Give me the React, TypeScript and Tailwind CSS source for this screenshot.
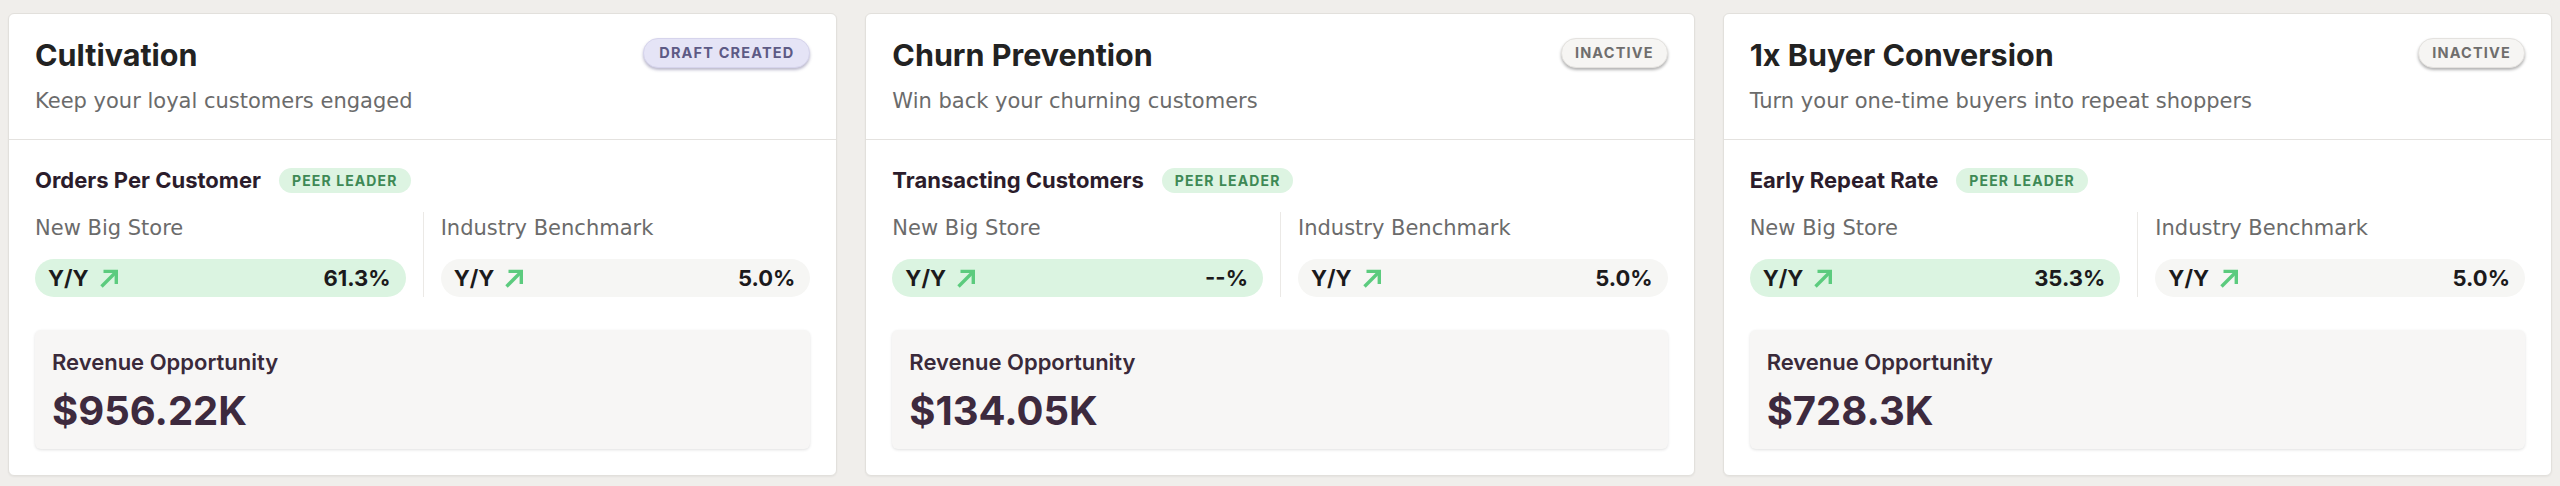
import React from 'react';

type Play = {
  title: string;
  status: 'draft' | 'inactive';
  blurb: string;
  metric: string;
  store: string;
  benchmark: string;
  revenue: string;
};

const PLAYS: Play[] = [
  {
    title: 'Cultivation',
    status: 'draft',
    blurb: 'Keep your loyal customers engaged',
    metric: 'Orders Per Customer',
    store: '61.3%',
    benchmark: '5.0%',
    revenue: '$956.22K',
  },
  {
    title: 'Churn Prevention',
    status: 'inactive',
    blurb: 'Win back your churning customers',
    metric: 'Transacting Customers',
    store: '--%',
    benchmark: '5.0%',
    revenue: '$134.05K',
  },
  {
    title: '1x Buyer Conversion',
    status: 'inactive',
    blurb: 'Turn your one-time buyers into repeat shoppers',
    metric: 'Early Repeat Rate',
    store: '35.3%',
    benchmark: '5.0%',
    revenue: '$728.3K',
  },
];

const heading = "font-['Inter',sans-serif]";
const body = "font-['DejaVu_Sans',sans-serif]";

const UpArrow = () => (
  <svg width="21" height="21" viewBox="0 0 21 21" fill="none" className="shrink-0">
    <path d="M2.5 18.5 L17 4" stroke="#5ccb7e" strokeWidth="3.4" />
    <path d="M4.5 3.4 H17.3 V16" stroke="#5ccb7e" strokeWidth="3.4" />
  </svg>
);

const StatusBadge = ({ status }: { status: Play['status'] }) =>
  status === 'draft' ? (
    <span
      className={`${heading} mt-[1px] inline-flex h-[30px] items-center rounded-full border border-[#d6d4ec] bg-[#e5e4f6] px-[15px] text-[14.5px] font-bold uppercase tracking-[0.08em] text-[#5d5a85] shadow-[0_2px_3px_rgba(60,55,110,0.35)]`}
    >
      Draft Created
    </span>
  ) : (
    <span
      className={`${heading} mt-[1px] inline-flex h-[30px] items-center rounded-full border border-[#e4e2df] bg-[#f6f5f3] px-[13px] text-[14.5px] font-bold uppercase tracking-[0.08em] text-[#6f6e6d] shadow-[0_2px_3px_rgba(0,0,0,0.3)]`}
    >
      Inactive
    </span>
  );

const YoYPill = ({ value, green }: { value: string; green?: boolean }) => (
  <div
    className={`mt-[15px] flex h-[38px] items-center justify-between rounded-full pl-[13px] pr-[15px] ${
      green ? 'bg-[#dbf4e1]' : 'bg-[#f6f6f4]'
    }`}
  >
    <div className="flex items-center gap-[10px]">
      <span className={`${heading} text-[22px] font-bold text-[#1c1a1c]`}>Y/Y</span>
      <UpArrow />
    </div>
    <span className={`${heading} text-[22px] font-bold text-[#1c1a1c]`}>{value}</span>
  </div>
);

const PlayCard = ({ play }: { play: Play }) => (
  <div className="flex flex-col rounded-md border border-[#e2e0dc] bg-white shadow-[0_1px_2px_rgba(0,0,0,0.05)]">
    <div className="border-b border-[#e4e2df] px-[26px] pt-[23px] pb-[24px]">
      <div className="flex items-start justify-between">
        <h2 className={`${heading} text-[30.5px] leading-[36px] font-bold text-[#222222]`}>{play.title}</h2>
        <StatusBadge status={play.status} />
      </div>
      <p className={`${body} mt-[14px] text-[21px] leading-[28px] text-[#6b6b6b]`}>{play.blurb}</p>
    </div>

    <div className="px-[26px] pt-[26px] pb-[26px]">
      <div className="flex items-center gap-[18px]">
        <h3 className={`${heading} text-[22px] leading-[28px] font-bold text-[#2b1c2b]`}>{play.metric}</h3>
        <span
          className={`${heading} inline-flex h-[25px] items-center rounded-full bg-[#ddf4e2] px-[13px] text-[14px] font-bold uppercase tracking-[0.08em] text-[#3e8955]`}
        >
          Peer Leader
        </span>
      </div>

      <div className="mt-[18px] grid grid-cols-2">
        <div className="pr-[17px]">
          <div className={`${body} text-[21px] leading-[32px] text-[#6b6b6b]`}>New Big Store</div>
          <YoYPill value={play.store} green />
        </div>
        <div className="border-l border-[#ebe9e6] pl-[17px]">
          <div className={`${body} text-[21px] leading-[32px] text-[#6b6b6b]`}>Industry Benchmark</div>
          <YoYPill value={play.benchmark} />
        </div>
      </div>

      <div className="mt-[33px] rounded-md bg-[#f7f6f5] px-[17px] pt-[18px] pb-[16px] shadow-[0_1px_3px_rgba(0,0,0,0.12)]">
        <div className={`${heading} text-[22px] leading-[28px] font-semibold text-[#3a2a3a]`}>Revenue Opportunity</div>
        <div className={`${heading} mt-[13px] text-[40px] leading-[44px] font-bold text-[#3d2a3e]`}>{play.revenue}</div>
      </div>
    </div>
  </div>
);

export default function App() {
  return (
    <div className="min-h-[486px] w-full bg-[#f0eeeb] px-[8px] pt-[13px] pb-[10px]">
      <div className="grid grid-cols-3 gap-[28px]">
        {PLAYS.map((play) => (
          <PlayCard key={play.title} play={play} />
        ))}
      </div>
    </div>
  );
}
